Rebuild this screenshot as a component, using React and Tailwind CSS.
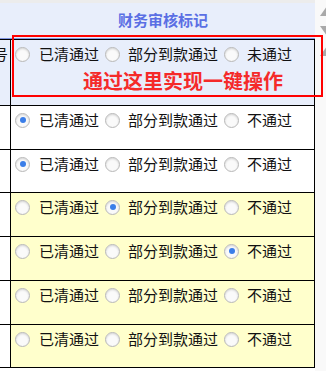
import React from "react";

const rows = [
  { bg: "bg-white", checked: 0, h: "h-[44px]" },
  { bg: "bg-white", checked: 0, h: "h-[43px]" },
  { bg: "bg-[#ffffcc]", checked: 1, h: "h-[44px]" },
  { bg: "bg-[#ffffcc]", checked: 2, h: "h-[44px]" },
  { bg: "bg-[#ffffcc]", checked: -1, h: "h-[44px]" },
  { bg: "bg-[#ffffcc]", checked: -1, h: "h-[43px]" },
];

function Radio({ checked, className = "" }) {
  return (
    <span
      className={`box-border flex h-[15px] w-[15px] shrink-0 items-center justify-center rounded-full border-[1.5px] border-[#b8b8b8] bg-[#fafafa] shadow-[inset_0_1px_2px_rgba(0,0,0,0.15)] ${className}`}
    >
      {checked && <span className="h-[6px] w-[6px] rounded-full bg-[#3b7ee8]" />}
    </span>
  );
}

function Options({ checked, last }) {
  const labels = ["已清通过", "部分到款通过", last];
  return (
    <div className="flex items-center leading-[20px]">
      {labels.map((l, i) => (
        <React.Fragment key={i}>
          <Radio checked={checked === i} className={i === 0 ? "ml-[4px]" : "ml-[6px]"} />
          <span className={`whitespace-nowrap ${i === 0 ? "ml-[9px]" : "ml-[8px]"}`}>{l}</span>
        </React.Fragment>
      ))}
    </div>
  );
}

export default function App() {
  return (
    <div
      className="relative flex h-[371px] w-[326px] overflow-hidden bg-white text-[15px] text-[#111]"
      style={{ fontFamily: '"Noto Sans CJK SC", "Noto Sans", sans-serif' }}
    >
      <div className="w-[315px] shrink-0">
        <div className="h-[3px] bg-[#ececec]" />
        <div className="flex h-[36px] border-b border-[#8196e2] bg-[#e8eefb]">
          <div className="w-[11px]" />
          <div className="flex flex-1 items-center justify-center pb-[1px] text-[15px] font-bold text-[#5a6fe4]">
            财务审核标记
          </div>
        </div>

        <div className="flex h-[66px] border-r border-t border-black bg-[#e8eefb]">
          <div className="flex w-[11px] shrink-0 justify-end overflow-hidden border-r border-black pr-[2px] pt-[4px] leading-[20px]">
            <span className="whitespace-nowrap">号</span>
          </div>
          <div className="flex-1 pt-[4px]">
            <Options checked={-1} last="未通过" />
          </div>
        </div>

        {rows.map((r, i) => (
          <div key={i} className={`flex border-r border-t border-black ${r.h} ${r.bg}`}>
            <div className="w-[11px] shrink-0 border-r border-black bg-white" />
            <div className="flex-1 pt-[4px]">
              <Options checked={r.checked} last="不通过" />
            </div>
          </div>
        ))}
        <div className="h-[1px] border-r border-black bg-black" />
      </div>

      <div className="w-[11px] shrink-0 bg-[#f9f9f9]">
        <svg width="11" height="60" viewBox="0 0 11 60">
          <path d="M5 16 L12 6 L19 16 Z" fill="#a9a9a9" />
          <path d="M5 26 L12 36 L19 26 Z" fill="#a9a9a9" />
          <path d="M5 56 L12 46 L19 56 Z" fill="#a9a9a9" />
        </svg>
      </div>

      <div className="absolute left-[12px] top-[35px] h-[62px] w-[311px] border-2 border-[#ff0000]" />
      <div className="absolute left-[83px] top-[68px] whitespace-nowrap text-[20px] font-bold leading-[26px] text-[#f52a2a]">
        通过这里实现一键操作
      </div>
    </div>
  );
}
